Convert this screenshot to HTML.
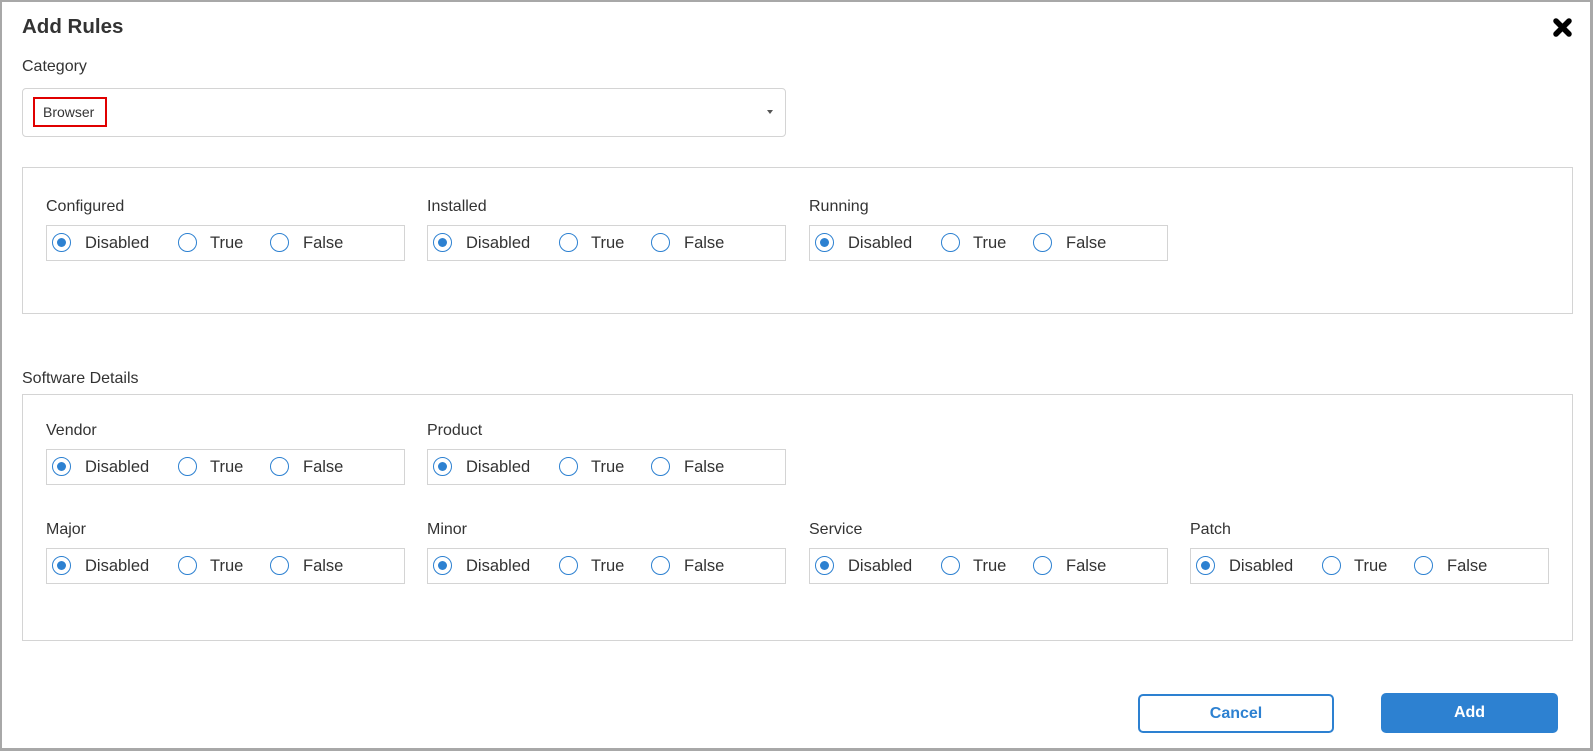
<!DOCTYPE html>
<html><head><meta charset="utf-8"><style>
*{box-sizing:border-box;margin:0;padding:0}
body{width:1593px;height:751px;background:#fff;font-family:"Liberation Sans",sans-serif;color:#333;position:relative;overflow:hidden}
.frame{position:absolute;left:0;top:0;width:1593px;height:751px;border:2px solid #a8a8a8;border-bottom-width:3px;border-right-width:3px}
.a{position:absolute}
.lbl{position:absolute;font-size:16px;color:#333;line-height:20px}
.panel{position:absolute;border:1px solid #d4d4d4;left:22px;width:1551px}
.grp{position:absolute;width:359px;height:36px;border:1px solid #d4d4d4}
.r{position:absolute;top:7px;width:19px;height:19px;border:1.5px solid #2d81d1;border-radius:50%}
.r.on::after{content:"";position:absolute;left:3.5px;top:3.5px;width:9px;height:9px;border-radius:50%;background:#2d81d1}
.t{position:absolute;top:7px;font-size:16.5px;line-height:20px;color:#333}
</style></head><body>
<div class="frame"></div>
<div class="a" style="left:22px;top:15px;font-size:20.5px;font-weight:bold;color:#333">Add Rules</div>
<svg class="a" style="left:1552px;top:17px" width="21" height="21" viewBox="0 0 21 21"><path d="M4 4L17 17M17 4L4 17" stroke="#000" stroke-width="5.5" stroke-linecap="round"/></svg>
<div class="lbl" style="left:22px;top:57px">Category</div>
<div class="a" style="left:22px;top:88px;width:764px;height:49px;border:1px solid #d4d4d4;border-radius:4px"></div>
<div class="a" style="left:33px;top:97px;width:74px;height:30px;border:2px solid #e00000;font-size:14px;line-height:26px;padding-left:8px;color:#333">Browser</div>
<div class="a" style="left:767px;top:110px;width:0;height:0;border-left:3.5px solid transparent;border-right:3.5px solid transparent;border-top:4px solid #555"></div>

<div class="panel" style="top:167px;height:147px"></div>
<div class="lbl" style="left:22px;top:369px">Software Details</div>
<div class="panel" style="top:394px;height:247px"></div>

<div id="g"></div>
<script>
function grp(x,y,label){
 var h='<div class="lbl" style="left:'+x+'px;top:'+(y-28)+'px">'+label+'</div>';
 h+='<div class="grp" style="left:'+x+'px;top:'+y+'px">'+
 '<div class="r on" style="left:5px"></div><div class="t" style="left:38px">Disabled</div>'+
 '<div class="r" style="left:131px"></div><div class="t" style="left:163px">True</div>'+
 '<div class="r" style="left:223px"></div><div class="t" style="left:256px">False</div></div>';
 return h;
}
var xs=[46,427,809,1190],s='';
s+=grp(xs[0],225,'Configured')+grp(xs[1],225,'Installed')+grp(xs[2],225,'Running');
s+=grp(xs[0],449,'Vendor')+grp(xs[1],449,'Product');
s+=grp(xs[0],548,'Major')+grp(xs[1],548,'Minor')+grp(xs[2],548,'Service')+grp(xs[3],548,'Patch');
document.getElementById('g').innerHTML=s;
</script>

<div class="a" style="left:1138px;top:694px;width:196px;height:39px;border:2px solid #2d81d1;border-radius:5px;color:#2d81d1;font-weight:bold;font-size:16px;text-align:center;line-height:35px">Cancel</div>
<div class="a" style="left:1381px;top:693px;width:177px;height:40px;background:#2d81d1;border-radius:5px;color:#fff;font-weight:bold;font-size:16px;text-align:center;line-height:40px">Add</div>
</body></html>
